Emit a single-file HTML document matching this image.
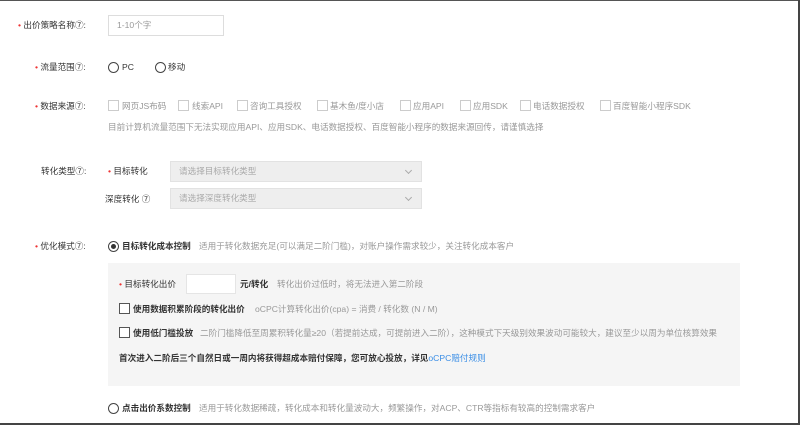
<!DOCTYPE html>
<html><head><meta charset="utf-8"><style>
*{margin:0;padding:0;box-sizing:border-box}
body{width:800px;height:425px;background:#fff;position:relative;overflow:hidden;font-family:"Liberation Sans","Noto Sans CJK SC",sans-serif;font-size:8.6px;color:#333}
.a{position:absolute;white-space:nowrap;line-height:12px}
.star{color:#e33;}
.g{color:#999}
.cb{position:absolute;width:11px;height:11px;border:1px solid #ccc;background:#fff}
.cbd{position:absolute;width:11px;height:11px;border:1px solid #555;background:#fff}
.rd{position:absolute;width:11px;height:11px;border:1px solid #444;border-radius:50%;background:#fff}
.sel{position:absolute;background:#eee;border:1px solid #e2e2e2;color:#aaa;padding-left:8px;line-height:19px}
.sel:after{content:"";position:absolute;right:10px;top:6px;width:4px;height:4px;border-right:1px solid #aaa;border-bottom:1px solid #aaa;transform:rotate(45deg)}
.b{font-weight:bold;color:#333}
</style></head><body>
<div style="position:absolute;left:0;top:0;width:800px;height:1px;background:#555"></div>
<div style="position:absolute;left:0;top:423px;width:800px;height:2px;background:#444"></div>
<div style="position:absolute;left:798px;top:0;width:2px;height:425px;background:#444"></div>

<div class="a" style="left:18px;top:19px"><span class="star">•</span> 出价策略名称⑦:</div>
<div style="position:absolute;left:108px;top:15px;width:116px;height:21px;border:1px solid #ddd"></div>
<div class="a g" style="left:117px;top:19px">1-10个字</div>

<div class="a" style="left:35px;top:61px"><span class="star">•</span> 流量范围⑦:</div>
<div class="rd" style="left:108px;top:62px"></div><div class="a" style="left:122px;top:61px">PC</div>
<div class="rd" style="left:155px;top:62px"></div><div class="a" style="left:168px;top:61px">移动</div>

<div class="a" style="left:35px;top:100px"><span class="star">•</span> 数据来源⑦:</div>
<div class="cb" style="left:108px;top:100px"></div><div class="a g" style="left:122px;top:100px">网页JS布码</div>
<div class="cb" style="left:178px;top:100px"></div><div class="a g" style="left:192px;top:100px">线索API</div>
<div class="cb" style="left:237px;top:100px"></div><div class="a g" style="left:250px;top:100px">咨询工具授权</div>
<div class="cb" style="left:317px;top:100px"></div><div class="a g" style="left:330px;top:100px">基木鱼/度小店</div>
<div class="cb" style="left:400px;top:100px"></div><div class="a g" style="left:413px;top:100px">应用API</div>
<div class="cb" style="left:460px;top:100px"></div><div class="a g" style="left:473px;top:100px">应用SDK</div>
<div class="cb" style="left:520px;top:100px"></div><div class="a g" style="left:533px;top:100px">电话数据授权</div>
<div class="cb" style="left:600px;top:100px"></div><div class="a g" style="left:613px;top:100px">百度智能小程序SDK</div>
<div class="a g" style="left:108px;top:121px">目前计算机流量范围下无法实现应用API、应用SDK、电话数据授权、百度智能小程序的数据来源回传，请谨慎选择</div>

<div class="a" style="left:41px;top:165px">转化类型⑦:</div>
<div class="a" style="left:108px;top:165px"><span class="star">•</span> 目标转化</div>
<div class="sel" style="left:170px;top:161px;width:252px;height:21px">请选择目标转化类型</div>
<div class="a" style="left:105px;top:193px">深度转化 ⑦</div>
<div class="sel" style="left:170px;top:188px;width:252px;height:21px">请选择深度转化类型</div>

<div class="a" style="left:35px;top:240px"><span class="star">•</span> 优化模式⑦:</div>
<div class="rd" style="left:108px;top:241px"></div><div style="position:absolute;left:111px;top:244px;width:5px;height:5px;border-radius:50%;background:#333"></div>
<div class="a b" style="left:122px;top:240px">目标转化成本控制</div>
<div class="a g" style="left:199px;top:240px">适用于转化数据充足(可以满足二阶门槛)，对账户操作需求较少，关注转化成本客户</div>

<div style="position:absolute;left:108px;top:263px;width:632px;height:123px;background:#f5f5f5"></div>
<div class="a" style="left:119px;top:278px"><span class="star">•</span> 目标转化出价</div>
<div style="position:absolute;left:186px;top:274px;width:50px;height:20px;background:#fff;border:1px solid #e5e5e5"></div>
<div class="a b" style="left:240px;top:278px">元/转化</div>
<div class="a g" style="left:277px;top:278px">转化出价过低时，将无法进入第二阶段</div>
<div class="cbd" style="left:119px;top:303px"></div><div class="a b" style="left:133px;top:303px">使用数据积累阶段的转化出价</div>
<div class="a g" style="left:255px;top:303px">oCPC计算转化出价(cpa) = 消费 / 转化数 (N / M)</div>
<div class="cbd" style="left:119px;top:327px"></div><div class="a b" style="left:133px;top:327px">使用低门槛投放</div>
<div class="a g" style="left:200px;top:327px">二阶门槛降低至周累积转化量≥20（若提前达成，可提前进入二阶），这种模式下天级别效果波动可能较大，建议至少以周为单位核算效果</div>
<div class="a b" style="left:119px;top:352px">首次进入二阶后三个自然日或一周内将获得超成本赔付保障，您可放心投放，详见<span style="color:#3a8ee6;font-weight:normal">oCPC赔付规则</span></div>

<div class="rd" style="left:108px;top:403px"></div>
<div class="a b" style="left:122px;top:402px">点击出价系数控制</div>
<div class="a g" style="left:199px;top:402px">适用于转化数据稀疏，转化成本和转化量波动大，频繁操作，对ACP、CTR等指标有较高的控制需求客户</div>
</body></html>
